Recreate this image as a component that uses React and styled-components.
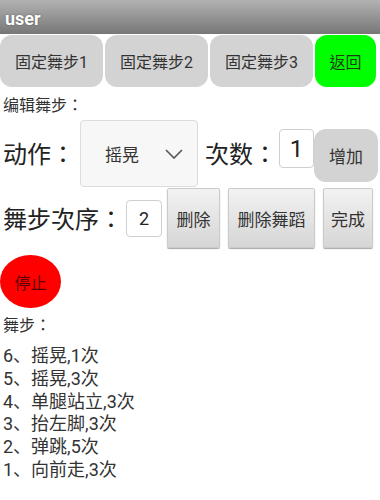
import React from "react";
import styled, { createGlobalStyle } from "styled-components";

const GlobalStyle = createGlobalStyle`
  html, body {
    margin: 0;
    padding: 0;
    background: #ffffff;
  }
  body {
    font-family: Roboto, "Noto Sans CJK TC", sans-serif;
    color: #2a2a2a;
  }
`;

const steps = [
  "6、摇晃,1次",
  "5、摇晃,3次",
  "4、单腿站立,3次",
  "3、抬左脚,3次",
  "2、弹跳,5次",
  "1、向前走,3次",
];

const App = () => {
  return (
    <Page>
      <GlobalStyle />
      <TitleBar>user</TitleBar>
      <TopRow>
        <PillButton>固定舞步1</PillButton>
        <PillButton>固定舞步2</PillButton>
        <PillButton>固定舞步3</PillButton>
        <PillButton green>返回</PillButton>
      </TopRow>

      <SmallLabel>编辑舞步：</SmallLabel>

      <ActionRow>
        <BigLabel>动作：</BigLabel>
        <Select>
          <span>摇晃</span>
          <svg width="18" height="10" viewBox="0 0 18 10">
            <path d="M1 1 L9 9 L17 1" fill="none" stroke="#555" strokeWidth="1.6" />
          </svg>
        </Select>
        <BigLabel left={7}>次数：</BigLabel>
        <NumInput w={35} h={39} size={24} left={2}>1</NumInput>
        <PillButton small>增加</PillButton>
      </ActionRow>

      <OrderRow>
        <BigLabel>舞步次序：</BigLabel>
        <NumInput w={36} h={37} size={18} left={3}>2</NumInput>
        <BevelButton w={53} left={5}>删除</BevelButton>
        <BevelButton w={87} left={8}>删除舞蹈</BevelButton>
        <BevelButton w={50} left={8}>完成</BevelButton>
      </OrderRow>

      <StopButton>停止</StopButton>

      <SmallLabel top={6}>舞步：</SmallLabel>

      <StepList>
        {steps.map((s) => (
          <li key={s}>{s}</li>
        ))}
      </StepList>
    </Page>
  );
};

export default App;

const Page = styled.div`
  width: 380px;
  height: 500px;
  overflow: hidden;
  background: #ffffff;
`;

const TitleBar = styled.div`
  height: 34px;
  line-height: 38px;
  padding-left: 5px;
  box-sizing: border-box;
  background: linear-gradient(#b2b2b2, #777777);
  color: #ffffff;
  font-family: Roboto, "Liberation Sans", sans-serif;
  font-weight: bold;
  font-size: 18px;
  text-shadow: 0 0 2px rgba(0, 0, 0, 0.4);
`;

const TopRow = styled.div`
  display: flex;
  gap: 2px;
  margin-top: 1px;
  height: 52px;
`;

const PillButton = styled.div`
  display: flex;
  flex-shrink: 0;
  align-items: center;
  justify-content: center;
  box-sizing: border-box;
  white-space: nowrap;
  padding: ${(p) => (p.small ? "0" : "0 15px")};
  height: ${(p) => (p.small ? "53px" : "52px")};
  width: ${(p) => (p.small ? "64px" : p.green ? "61px" : "auto")};
  border-radius: 12px;
  background: ${(p) => (p.green ? "#00ff00" : "#d3d3d3")};
  color: ${(p) => (p.green ? "#1f3a12" : "#333333")};
  font-size: ${(p) => (p.small ? "17px" : "16px")};
  align-self: ${(p) => (p.small ? "flex-start" : "auto")};
  margin-top: ${(p) => (p.small ? "9px" : "0")};
`;

const SmallLabel = styled.div`
  margin-top: ${(p) => (p.top ?? 7)}px;
  padding-left: 3px;
  line-height: 24px;
  font-size: 16px;
  color: #333333;
`;

const ActionRow = styled.div`
  display: flex;
  align-items: center;
  height: 67px;
  margin-top: 2px;
`;

const BigLabel = styled.div`
  font-size: 24px;
  color: #222222;
  margin-left: ${(p) => (p.left ?? 3)}px;
  white-space: nowrap;
  transform: translateY(-1px);
`;

const Select = styled.div`
  display: flex;
  flex-shrink: 0;
  align-items: center;
  justify-content: space-between;
  box-sizing: border-box;
  width: 118px;
  height: 67px;
  margin-left: 5px;
  padding: 0 14px 0 24px;
  border: 1px solid #dcdcdc;
  border-radius: 4px;
  background: #f7f7f7;
  font-size: 17px;
  color: #333333;
`;

const NumInput = styled.div`
  display: flex;
  flex-shrink: 0;
  align-items: center;
  justify-content: center;
  box-sizing: border-box;
  width: ${(p) => p.w}px;
  height: ${(p) => p.h}px;
  margin-left: ${(p) => p.left}px;
  border: 1px solid #cfcfcf;
  border-radius: 4px;
  background: #ffffff;
  font-size: ${(p) => p.size}px;
  color: #222222;
  align-self: ${(p) => (p.size > 20 ? "flex-start" : "center")};
  margin-top: ${(p) => (p.size > 20 ? "9px" : "0")};
`;

const OrderRow = styled.div`
  display: flex;
  align-items: center;
  height: 60px;
  margin-top: 1px;
`;

const BevelButton = styled.div`
  display: flex;
  flex-shrink: 0;
  align-items: center;
  justify-content: center;
  box-sizing: border-box;
  width: ${(p) => p.w}px;
  height: 60px;
  margin-left: ${(p) => p.left}px;
  border: 1px solid #cbcbcb;
  border-radius: 2px;
  background: linear-gradient(#f2f2f2, #d6d6d6);
  box-shadow: 0 1px 1px rgba(0, 0, 0, 0.35);
  font-size: 17px;
  color: #333333;
`;

const StopButton = styled.div`
  display: flex;
  align-items: center;
  justify-content: center;
  width: 61px;
  height: 53px;
  margin-top: 7px;
  border-radius: 50%;
  background: #ff0000;
  color: #5a0000;
  font-size: 16px;
`;

const StepList = styled.ul`
  list-style: none;
  margin: 7px 0 0;
  padding: 0 0 0 3px;
  font-family: Roboto, "Noto Sans CJK SC", sans-serif;
  font-size: 18px;
  line-height: 22.8px;
  color: #333333;
`;
